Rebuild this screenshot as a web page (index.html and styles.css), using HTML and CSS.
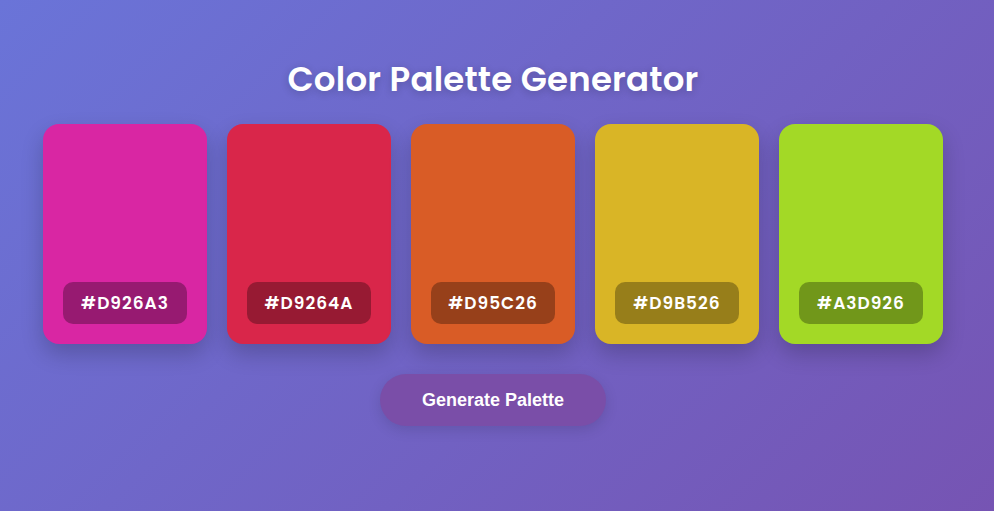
FILE: index.html
```html
<!DOCTYPE html>
<html>
<head>
<meta charset="utf-8">
<link rel="stylesheet" href="styles.css">
</head>
<body>
<main class="app">
  <h1 class="title">Color Palette Generator</h1>
  <div class="palette">
    <div class="swatch" style="background:#D926A3"><span class="code">#D926A3</span></div>
    <div class="swatch" style="background:#D9264A"><span class="code">#D9264A</span></div>
    <div class="swatch" style="background:#D95C26"><span class="code">#D95C26</span></div>
    <div class="swatch" style="background:#D9B526"><span class="code">#D9B526</span></div>
    <div class="swatch" style="background:#A3D926"><span class="code">#A3D926</span></div>
  </div>
  <button class="generate">Generate Palette</button>
</main>
</body>
</html>
```
FILE: styles.css
```css
html, body {
  margin: 0;
  height: 100%;
}
body {
  background: linear-gradient(135deg, #6a74d8 0%, #7654b3 100%);
  font-family: "Poppins", "Inter", "DejaVu Sans", sans-serif;
  overflow: hidden;
}
.app {
  width: 986px;
  display: flex;
  flex-direction: column;
  align-items: center;
  padding-top: 60px;
}
.title {
  margin: 0 0 26px;
  font-size: 34px;
  font-weight: 600;
  letter-spacing: 0.2px;
  color: #fff;
  line-height: 38px;
  text-shadow: 0 2px 8px rgba(0,0,0,0.2);
}
.palette {
  display: flex;
  gap: 20px;
}
.swatch {
  width: 164px;
  height: 220px;
  border-radius: 16px;
  box-shadow: 0 10px 22px rgba(0,0,0,0.2);
  display: flex;
  align-items: flex-end;
  justify-content: center;
  padding-bottom: 20px;
  box-sizing: border-box;
}
.code {
  width: 124px;
  height: 42px;
  border-radius: 10px;
  background: rgba(0,0,0,0.3);
  color: #fff;
  font-weight: 600;
  font-size: 17px;
  letter-spacing: 1px;
  display: flex;
  align-items: center;
  justify-content: center;
}
.generate {
  margin-top: 30px;
  width: 226px;
  height: 52px;
  border: none;
  border-radius: 26px;
  background: #7a4ea8;
  color: #fff;
  font-family: "Liberation Sans", Arial, sans-serif;
  font-weight: 700;
  font-size: 18px;
  box-shadow: 0 4px 14px rgba(0,0,0,0.12);
}
```
